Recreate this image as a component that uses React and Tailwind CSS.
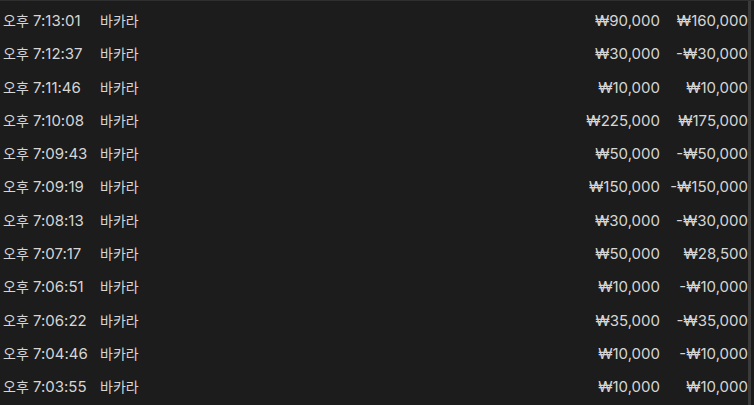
const rows = [
  ["7:13:01", "₩90,000", "₩160,000"],
  ["7:12:37", "₩30,000", "-₩30,000"],
  ["7:11:46", "₩10,000", "₩10,000"],
  ["7:10:08", "₩225,000", "₩175,000"],
  ["7:09:43", "₩50,000", "-₩50,000"],
  ["7:09:19", "₩150,000", "-₩150,000"],
  ["7:08:13", "₩30,000", "-₩30,000"],
  ["7:07:17", "₩50,000", "₩28,500"],
  ["7:06:51", "₩10,000", "-₩10,000"],
  ["7:06:22", "₩35,000", "-₩35,000"],
  ["7:04:46", "₩10,000", "-₩10,000"],
  ["7:03:55", "₩10,000", "₩10,000"],
];

export default function App() {
  return (
    <div
      className="w-[754px] h-[405px] bg-[#1c1c1c] border-t border-[#2f2f2f] flex overflow-hidden text-[15px] text-[#d6d6d6]"
      style={{ fontFamily: '"Inter", "Noto Sans CJK KR", sans-serif' }}
    >
      <div className="w-[748px] pt-[3px] overflow-hidden">
        {rows.map(([time, bet, result], i) => (
          <div key={i} className="h-[33.3px] leading-[33.3px] flex items-baseline pl-[3px] whitespace-nowrap">
            <span className="w-[97px] shrink-0">
              <span className="text-[14px]">오후</span> {time}
            </span>
            <span className="flex-1 text-[14px]">바카라</span>
            <span className="w-[90px] text-right">{bet}</span>
            <span className="w-[88px] text-right">{result}</span>
          </div>
        ))}
      </div>
      <div className="w-[3px] bg-[#3a3a3a]" />
      <div className="flex-1 bg-[#1a1a1a]" />
    </div>
  );
}
